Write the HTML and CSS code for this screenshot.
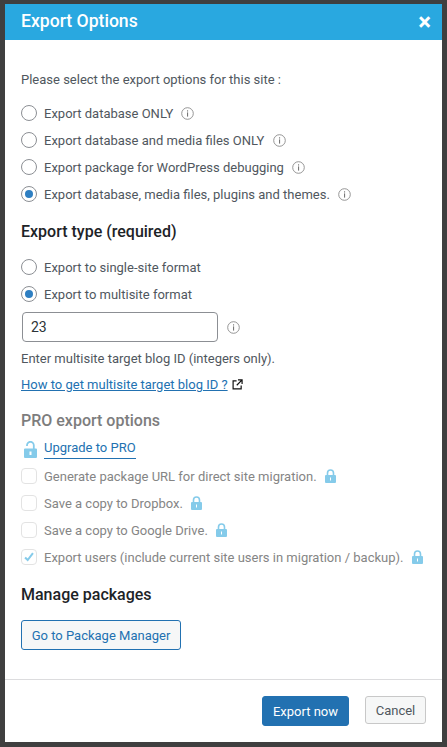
FILE: index.html
```html
<!DOCTYPE html>
<html lang="en">
<head>
    <meta charset="UTF-8">
    <title>Export Options</title>
    <link rel="stylesheet" href="styles.css">
</head>
<body>
    <svg class="icon-defs" width="0" height="0">
        <symbol id="info" viewBox="0 0 13 13">
            <circle cx="6.5" cy="6.5" r="5.8" fill="none" stroke="#8a8a8a" stroke-width="0.9"/>
            <rect x="6" y="5.4" width="1.1" height="4.2" fill="#777"/>
            <rect x="6" y="3.3" width="1.1" height="1.2" fill="#777"/>
        </symbol>
        <symbol id="lock" viewBox="0 0 11 14">
            <path d="M2.5 6.5V4a3 3 0 0 1 6 0v2.5" fill="none" stroke="#85cbea" stroke-width="1.6"/>
            <path fill-rule="evenodd" fill="#85cbea" d="M1 6h9a1 1 0 0 1 1 1v6a1 1 0 0 1-1 1H1a1 1 0 0 1-1-1V7a1 1 0 0 1 1-1zm4 2.5v3h1v-3z"/>
        </symbol>
    </svg>

    <div class="modal">
        <div class="modal-header">
            <h1>Export Options</h1>
            <span class="close">×</span>
        </div>

        <div class="modal-body">
            <p class="intro">Please select the export options for this site :</p>
            <div class="option-list">
                <div class="option"><span class="radio"></span>Export database ONLY <svg class="info"><use href="#info"/></svg></div>
                <div class="option"><span class="radio"></span>Export database and media files ONLY <svg class="info"><use href="#info"/></svg></div>
                <div class="option"><span class="radio"></span>Export package for WordPress debugging <svg class="info"><use href="#info"/></svg></div>
                <div class="option"><span class="radio checked"></span>Export database, media files, plugins and themes. <svg class="info"><use href="#info"/></svg></div>
            </div>

            <h2 class="type-title">Export type (required)</h2>
            <div class="option-list">
                <div class="option"><span class="radio"></span>Export to single-site format</div>
                <div class="option"><span class="radio checked"></span>Export to multisite format</div>
            </div>
            <div class="blog-id">
                <div class="text-input">23</div>
                <svg class="info"><use href="#info"/></svg>
            </div>
            <p class="hint">Enter multisite target blog ID (integers only).</p>
            <p class="help-link">
                <a href="#">How to get multisite target blog ID ?</a>
                <svg class="external" viewBox="0 0 12 12"><path d="M5 2H1.2v8.8H10V7M6.5 1H11v4.5M11 1 5.2 6.8" fill="none" stroke="#111" stroke-width="1.3"/></svg>
            </p>

            <h2 class="pro-title">PRO export options</h2>
            <div class="upgrade">
                <svg class="lock-open" viewBox="0 0 13 17">
                    <path d="M3 5V4.200a3.400 3.400 0 0 1 6.800 0V8" fill="none" stroke="#85cbea" stroke-width="1.8"/>
                    <path fill-rule="evenodd" fill="#85cbea" d="M1 7.500h11a1 1 0 0 1 1 1V16a1 1 0 0 1-1 1H1a1 1 0 0 1-1-1V8.500a1 1 0 0 1 1-1zm4.500 3v3.500h2v-3.500z"/>
                </svg>
                <a href="#">Upgrade to PRO</a>
            </div>
            <div class="pro-list">
                <div class="pro-option"><span class="check"></span>Generate package URL for direct site migration. <svg class="lock"><use href="#lock"/></svg></div>
                <div class="pro-option"><span class="check"></span>Save a copy to Dropbox. <svg class="lock"><use href="#lock"/></svg></div>
                <div class="pro-option"><span class="check"></span>Save a copy to Google Drive. <svg class="lock"><use href="#lock"/></svg></div>
                <div class="pro-option"><span class="check"><svg viewBox="0 0 16 16"><path d="M3.500 8.500 6.500 11.500 12.500 3.500" fill="none" stroke="#85cbea" stroke-width="2.300"/></svg></span>Export users (include current site users in migration / backup). <svg class="lock"><use href="#lock"/></svg></div>
            </div>

            <h2 class="manage-title">Manage packages</h2>
            <button class="btn-outline">Go to Package Manager</button>
        </div>

        <div class="modal-footer">
            <button class="btn-primary">Export now</button>
            <button class="btn-cancel">Cancel</button>
        </div>
    </div>
</body>
</html>
```

FILE: styles.css
```css
* {
    box-sizing: border-box;
}

body {
    margin: 0;
    height: 747px;
    overflow: hidden;
    padding: 4px 5px 5px;
    background-color: #3f3f3f;
    font-family: Roboto, 'Liberation Sans', sans-serif;
    font-size: 13px;
    color: #50575e;
}

.icon-defs {
    position: absolute;
}

.modal {
    width: 437px;
    height: 738px;
    background-color: #fff;
    display: flex;
    flex-direction: column;
}

.modal-header {
    height: 36px;
    flex-shrink: 0;
    padding: 0 11px 2px 16px;
    background-color: #29a8e0;
    color: #fff;
    display: flex;
    justify-content: space-between;
    align-items: center;
}

.modal-header h1 {
    margin: 0;
    font-size: 17.6px;
    font-weight: 500;
}

.close {
    margin-top: 2px;
    font-size: 24px;
    font-weight: 700;
    line-height: 1;
}

.modal-body {
    flex: 1;
    padding: 0 16px;
}

.intro {
    margin: 31px 0 14px;
    line-height: 18px;
}

.option-list {
    display: flex;
    flex-direction: column;
    gap: 7px;
}

.option,
.pro-option {
    height: 20px;
    display: flex;
    align-items: center;
    white-space: pre;
}

.radio {
    width: 16px;
    height: 16px;
    margin-right: 7px;
    border: 1px solid #8c8f94;
    border-radius: 50%;
    display: flex;
    align-items: center;
    justify-content: center;
}

.radio.checked::before {
    content: '';
    width: 8px;
    height: 8px;
    border-radius: 50%;
    background-color: #2e7fc2;
}

.info {
    width: 13px;
    height: 13px;
    margin-left: 5px;
}

h2 {
    margin: 0;
    font-size: 16px;
    font-weight: 500;
    line-height: 20px;
    color: #1d2327;
}

.type-title {
    margin: 18px 0 15px;
}

.blog-id {
    margin: 8px 0 0 1px;
    display: flex;
    align-items: center;
}

.text-input {
    width: 196px;
    height: 30px;
    padding: 0 8px;
    border: 1px solid #8c8f94;
    border-radius: 4px;
    font-size: 14px;
    line-height: 28px;
    color: #2c3338;
}

.blog-id .info {
    margin-left: 9px;
}

.hint {
    margin: 8px 0 0;
    line-height: 18px;
}

.help-link {
    margin: 7px 0 0;
    height: 18px;
    display: flex;
    align-items: center;
}

.help-link a {
    color: #2271b1;
}

.external {
    width: 11px;
    height: 11px;
    margin-left: 4px;
}

.pro-title {
    margin-top: 18px;
    color: #7d7d7d;
}

.upgrade {
    margin-top: 7px;
    height: 22px;
    display: flex;
    align-items: center;
}

.lock-open {
    width: 13px;
    height: 17px;
    margin: 0 7px 0 3px;
}

.upgrade a {
    padding-bottom: 3px;
    border-bottom: 1px solid #2271b1;
    color: #2271b1;
    text-decoration: none;
}

.pro-list {
    margin-top: 6px;
    display: flex;
    flex-direction: column;
    gap: 7px;
    color: #858585;
}

.check {
    width: 16px;
    height: 16px;
    margin-right: 7px;
    border: 1px solid #e3e3e3;
    border-radius: 4px;
    display: flex;
}

.lock {
    width: 11px;
    height: 14px;
    margin-left: 5px;
}

.manage-title {
    margin: 18px 0 15px;
}

button {
    font-family: inherit;
    font-size: 13px;
    border-radius: 3px;
}

.btn-outline {
    width: 160px;
    height: 30px;
    padding: 0;
    border: 1px solid #2271b1;
    background-color: #f6f7f7;
    color: #2271b1;
}

.modal-footer {
    height: 63px;
    flex-shrink: 0;
    padding: 16px 16px 0 0;
    border-top: 1px solid #dcdcde;
    display: flex;
    justify-content: flex-end;
    gap: 16px;
}

.btn-primary {
    width: 87px;
    height: 30px;
    border: 1px solid #2271b1;
    background-color: #2271b1;
    color: #fff;
}

.btn-cancel {
    width: 61px;
    height: 28px;
    border: 1px solid #c8c8c8;
    background-color: #f6f7f7;
    color: #50575e;
}
```
